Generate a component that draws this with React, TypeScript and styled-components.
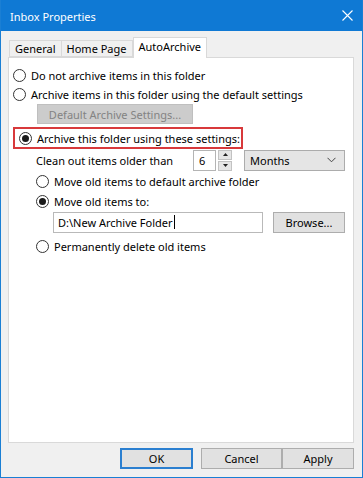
import React from "react";
import styled, { createGlobalStyle } from "styled-components";

const GlobalStyle = createGlobalStyle`
	html, body {
		margin: 0;
		padding: 0;
		background: #ffffff;
	}
	* {
		box-sizing: border-box;
	}
`;

const Window = styled.div`
	width: 363px;
	height: 478px;
	border: 1px solid #1a7fd4;
	border-top: none;
	background: #f0f0f0;
	font-family: "Noto Sans", "Liberation Sans", sans-serif;
	font-size: 11px;
	line-height: 15px;
	color: #000;
	display: flex;
	flex-direction: column;
	overflow: hidden;
	white-space: nowrap;
`;

const TitleBar = styled.div`
	height: 31px;
	background: #0f79d4;
	color: #fff;
	display: flex;
	align-items: center;
	justify-content: space-between;
	padding: 0 10px 0 10px;
	margin: 0 -1px;
`;

const Title = styled.span`
	font-size: 11px;
	padding-top: 1px;
`;

const Body = styled.div`
	flex: 1;
	padding: 6px 8px 0 7px;
	display: flex;
	flex-direction: column;
`;

const TabStrip = styled.div`
	display: flex;
	align-items: flex-end;
	height: 20px;
	padding-left: 1px;
	position: relative;
	z-index: 1;
`;

const Tab = styled.div<{ $active?: boolean }>`
	height: ${(p) => (p.$active ? "21px" : "17px")};
	margin-bottom: ${(p) => (p.$active ? "-1px" : "0")};
	padding: ${(p) => (p.$active ? "0 5px 3px" : "0 5px 0")};
	display: flex;
	align-items: center;
	background: ${(p) => (p.$active ? "#fff" : "#f0f0f0")};
	border: 1px solid #d9d9d9;
	border-bottom: ${(p) => (p.$active ? "none" : "1px solid #d9d9d9")};
	border-left: ${(p) => (p.$active ? "1px solid #d9d9d9" : "none")};
	&:first-child {
		border-left: 1px solid #d9d9d9;
	}
`;

const Panel = styled.div`
	height: 386px;
	background: #fff;
	border: 1px solid #d9d9d9;
	padding: 8px 0 0 4px;
	display: flex;
	flex-direction: column;
`;

const Row = styled.label<{ $indent?: number; $gap?: number }>`
	display: flex;
	align-items: center;
	height: 19px;
	padding-left: ${(p) => p.$indent ?? 0}px;
	margin-top: ${(p) => p.$gap ?? 0}px;
`;

const RadioCircle = styled.span<{ $checked?: boolean }>`
	width: 13px;
	height: 13px;
	border-radius: 50%;
	border: 1px solid #333;
	background: #fff;
	margin-right: 5px;
	display: flex;
	align-items: center;
	justify-content: center;
	flex: none;
	&::after {
		content: "";
		width: 7px;
		height: 7px;
		border-radius: 50%;
		background: ${(p) => (p.$checked ? "#1a1a1a" : "transparent")};
	}
`;

const Radio = ({ checked, children }: { checked?: boolean; children: React.ReactNode }) => (
	<>
		<RadioCircle $checked={checked} />
		<span>{children}</span>
	</>
);

const Button = styled.div<{ $disabled?: boolean; $default?: boolean; $width: number; $height?: number }>`
	width: ${(p) => p.$width}px;
	height: ${(p) => p.$height ?? 21}px;
	display: flex;
	align-items: center;
	justify-content: center;
	background: ${(p) => (p.$disabled ? "#cccccc" : "#e1e1e1")};
	color: ${(p) => (p.$disabled ? "#838383" : "#000")};
	border: ${(p) => (p.$default ? "2px solid #2b7fd0" : p.$disabled ? "1px solid #bfbfbf" : "1px solid #adadad")};
`;

const ButtonRow = styled.div`
	display: flex;
	padding-left: 24px;
	height: 20px;
`;

const RedBox = styled.div`
	margin-top: 3px;
	width: 230px;
	height: 22px;
	border: 2px solid #d8393b;
	display: flex;
	align-items: center;
	padding-left: 4px;
`;

const SettingsRow = styled.div`
	display: flex;
	align-items: center;
	height: 22px;
	padding-left: 23px;
`;

const CleanLabel = styled.span`
	width: 157px;
`;

const NumBox = styled.div`
	width: 23px;
	height: 21px;
	border: 1px solid #b4b4b4;
	display: flex;
	align-items: center;
	padding-left: 5px;
	background: #fff;
`;

const Spin = styled.div`
	width: 14px;
	height: 21px;
	margin-left: 2px;
	display: flex;
	flex-direction: column;
	gap: 1px;
`;

const SpinHalf = styled.div`
	flex: 1;
	background: #e6e6e6;
	border: 1px solid #c2c2c2;
	display: flex;
	align-items: center;
	justify-content: center;
`;

const Select = styled.div`
	width: 101px;
	height: 21px;
	margin-left: 12px;
	background: #e5e5e5;
	border: 1px solid #acacac;
	display: flex;
	align-items: center;
	justify-content: space-between;
	padding: 0 8px 0 5px;
`;

const PathRow = styled.div`
	display: flex;
	align-items: center;
	padding-left: 40px;
	height: 22px;
`;

const PathInput = styled.div`
	width: 210px;
	height: 21px;
	border: 1px solid #b9b9b9;
	display: flex;
	align-items: center;
	padding-left: 4px;
	background: #fff;
`;

const BrowseWrap = styled.div`
	margin-left: 10px;
`;

const Caret = styled.span`
	display: inline-block;
	width: 1px;
	height: 14px;
	background: #000;
	margin-left: 1px;
`;

const Footer = styled.div`
	display: flex;
	justify-content: flex-end;
	gap: 8px;
	padding: 5px 0 0 0;
`;

const ApplyGap = styled.div`
	margin-left: -8px;
`;

const App = () => {
	return (
		<>
			<GlobalStyle />
			<Window>
				<TitleBar>
					<Title>Inbox Properties</Title>
					<svg width="11" height="11" viewBox="0 0 11 11">
						<path d="M0.5 0.5 L10.5 10.5 M10.5 0.5 L0.5 10.5" stroke="#fff" strokeWidth="1.1" />
					</svg>
				</TitleBar>
				<Body>
					<TabStrip>
						<Tab>General</Tab>
						<Tab>Home Page</Tab>
						<Tab $active>AutoArchive</Tab>
					</TabStrip>
					<Panel>
						<Row>
							<Radio>Do not archive items in this folder</Radio>
						</Row>
						<Row>
							<Radio>Archive items in this folder using the default settings</Radio>
						</Row>
						<ButtonRow>
							<Button $disabled $width={156} $height={20}>
								Default Archive Settings...
							</Button>
						</ButtonRow>
						<RedBox>
							<Radio checked>Archive this folder using these settings:</Radio>
						</RedBox>
						<SettingsRow>
							<CleanLabel>Clean out items older than</CleanLabel>
							<NumBox>6</NumBox>
							<Spin>
								<SpinHalf>
									<svg width="5" height="3" viewBox="0 0 5 3">
										<path d="M0 3 L2.5 0 L5 3 Z" fill="#222" />
									</svg>
								</SpinHalf>
								<SpinHalf>
									<svg width="5" height="3" viewBox="0 0 5 3">
										<path d="M0 0 L2.5 3 L5 0 Z" fill="#222" />
									</svg>
								</SpinHalf>
							</Spin>
							<Select>
								<span>Months</span>
								<svg width="9" height="6" viewBox="0 0 9 6">
									<path d="M0.5 0.8 L4.5 4.8 L8.5 0.8" stroke="#444" strokeWidth="1" fill="none" />
								</svg>
							</Select>
						</SettingsRow>
						<Row $indent={23} $gap={1}>
							<Radio>Move old items to default archive folder</Radio>
						</Row>
						<Row $indent={23} $gap={1}>
							<Radio checked>Move old items to:</Radio>
						</Row>
						<PathRow>
							<PathInput>
								D:\New Archive Folder
								<Caret />
							</PathInput>
							<BrowseWrap>
								<Button $width={72}>Browse...</Button>
							</BrowseWrap>
						</PathRow>
						<Row $indent={23} $gap={4}>
							<Radio>Permanently delete old items</Radio>
						</Row>
					</Panel>
					<Footer>
						<Button $default $width={73}>
							OK
						</Button>
						<Button $width={81}>Cancel</Button>
						<ApplyGap>
							<Button $width={72}>Apply</Button>
						</ApplyGap>
					</Footer>
				</Body>
			</Window>
		</>
	);
};

export default App;
